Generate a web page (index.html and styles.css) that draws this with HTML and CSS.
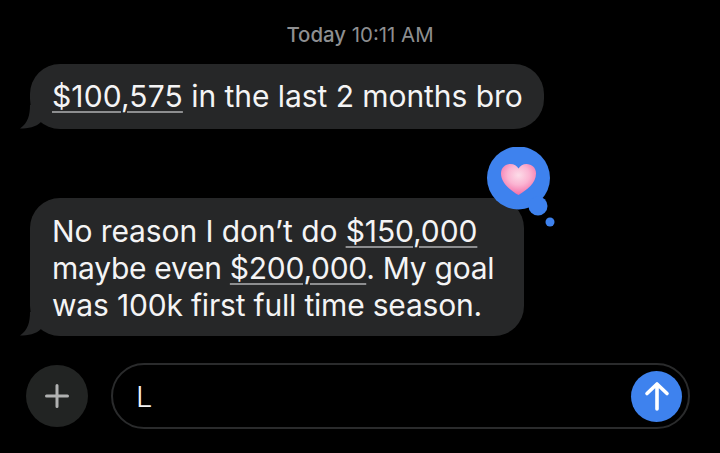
FILE: index.html
```html
<!DOCTYPE html>
<html lang="en">
<head>
<meta charset="utf-8">
<title>Messages</title>
<link rel="stylesheet" href="styles.css">
</head>
<body>
<main class="screen">
  <div class="stamp"><b>Today</b> 10:11 AM</div>
  <div class="bubble first">
    <svg class="tail" width="24" height="24" viewBox="0 0 24 24"><path d="M10 0 C10 10 8 18 0 23.500 C8 23.500 16 22 21 17 L24 19 V0 Z"/></svg>
    <a class="link wide">$100,575</a> in the last 2 months bro
  </div>
  <div class="bubble second">
    <svg class="tail" width="24" height="24" viewBox="0 0 24 24"><path d="M10 0 C10 10 8 18 0 23.500 C8 23.500 16 22 21 17 L24 19 V0 Z"/></svg>
    <svg class="tapback" width="72" height="84" viewBox="0 0 72 84">
      <defs>
        <radialGradient id="heart" cx="0.5" cy="0.36" r="0.7">
          <stop offset="0" stop-color="#fcdce8"/>
          <stop offset="0.45" stop-color="#fbb4d2"/>
          <stop offset="1" stop-color="#f2609f"/>
        </radialGradient>
      </defs>
      <circle cx="32.500" cy="31" r="31.500" fill="#3e82ee"/>
      <circle cx="52" cy="59" r="9.500" fill="#3e82ee"/>
      <circle cx="64" cy="75" r="4.500" fill="#3e82ee"/>
      <path d="M32.500 48 C24 43 15 36 15 26.500 C15 20.500 19.500 17 24.500 17 C28 17 31 18.800 32.500 21.500 C34 18.800 37 17 40.500 17 C45.500 17 50 20.500 50 26.500 C50 36 41 43 32.500 48 Z" fill="url(#heart)"/>
    </svg>
    <div class="line-a">No reason I don’t do <a class="link">$150,000</a></div>
    <div class="line-b">maybe even <a class="link">$200,000</a>. My goal</div>
    <div class="line-c">was 100k first full time season.</div>
  </div>
  <div class="composer">
    <button class="plus" aria-label="Add">
      <svg width="26" height="26" viewBox="0 0 26 26"><path d="M13 2.500 V23.500 M2.500 13 H23.500" stroke="#b0b1b1" stroke-width="3" stroke-linecap="round"/></svg>
    </button>
    <div class="field">
      <span class="typed">L</span>
      <button class="send" aria-label="Send">
        <svg width="26" height="30" viewBox="0 0 26 30"><path d="M13 28 V3 M3 12.500 L13 3 L23 12.500" fill="none" stroke="#fff" stroke-width="3.600" stroke-linecap="round" stroke-linejoin="round"/></svg>
      </button>
    </div>
  </div>
</main>
</body>
</html>
```
FILE: styles.css
```css
* { box-sizing: border-box; }
html, body { margin: 0; padding: 0; background: #000; }
body { font-family: Inter, "Liberation Sans", sans-serif; }
.screen {
  width: 720px;
  height: 453px;
  overflow: hidden;
  background: #000;
  display: flex;
  flex-direction: column;
  align-items: flex-start;
  padding: 23px 30px 0 26px;
}
.stamp {
  align-self: stretch;
  margin: 0 0 0 4px;
  text-align: center;
  font-size: 20.4px;
  line-height: 24px;
  color: #8e8f91;
}
.stamp b { font-weight: 500; }
.bubble {
  position: relative;
  margin-left: 4px;
  background: #262728;
  color: #f4f4f5;
  font-size: 30px;
  line-height: 37px;
  border-radius: 30px;
}
.first { margin-top: 17px; width: 514px; height: 65px; padding: 14px 0 0 22px; white-space: nowrap; letter-spacing: -0.06px; }
.second { margin-top: 69px; width: 494px; height: 138px; padding: 15px 0 0 22px; white-space: nowrap; }
.line-a { letter-spacing: -0.1px; }
.line-b { letter-spacing: -0.27px; }
.line-c { letter-spacing: -0.19px; }
.tail { position: absolute; left: -10px; bottom: 0; fill: #262728; }
.tapback { position: absolute; left: 456px; top: -51px; }
.link {
  text-decoration: underline;
  text-decoration-color: #8d8e90;
  text-decoration-thickness: 2px;
  text-underline-offset: 4px;
}
.wide { letter-spacing: 0.12px; }
.composer {
  margin-top: 27px;
  display: flex;
  align-items: center;
  gap: 23px;
}
.plus {
  width: 62px;
  height: 62px;
  padding: 0;
  border: 0;
  border-radius: 50%;
  background: #222423;
  display: flex;
  align-items: center;
  justify-content: center;
}
.field {
  width: 579px;
  height: 66px;
  border: 2px solid #2a2b2c;
  border-radius: 33px;
  display: flex;
  align-items: center;
  justify-content: space-between;
  padding: 0 6px 0 23px;
}
.typed { font-size: 29px; font-weight: 300; color: #f4f4f5; }
.send {
  width: 51px;
  height: 51px;
  padding: 0;
  border: 0;
  border-radius: 50%;
  background: #3e82ee;
  display: flex;
  align-items: center;
  justify-content: center;
}
```
